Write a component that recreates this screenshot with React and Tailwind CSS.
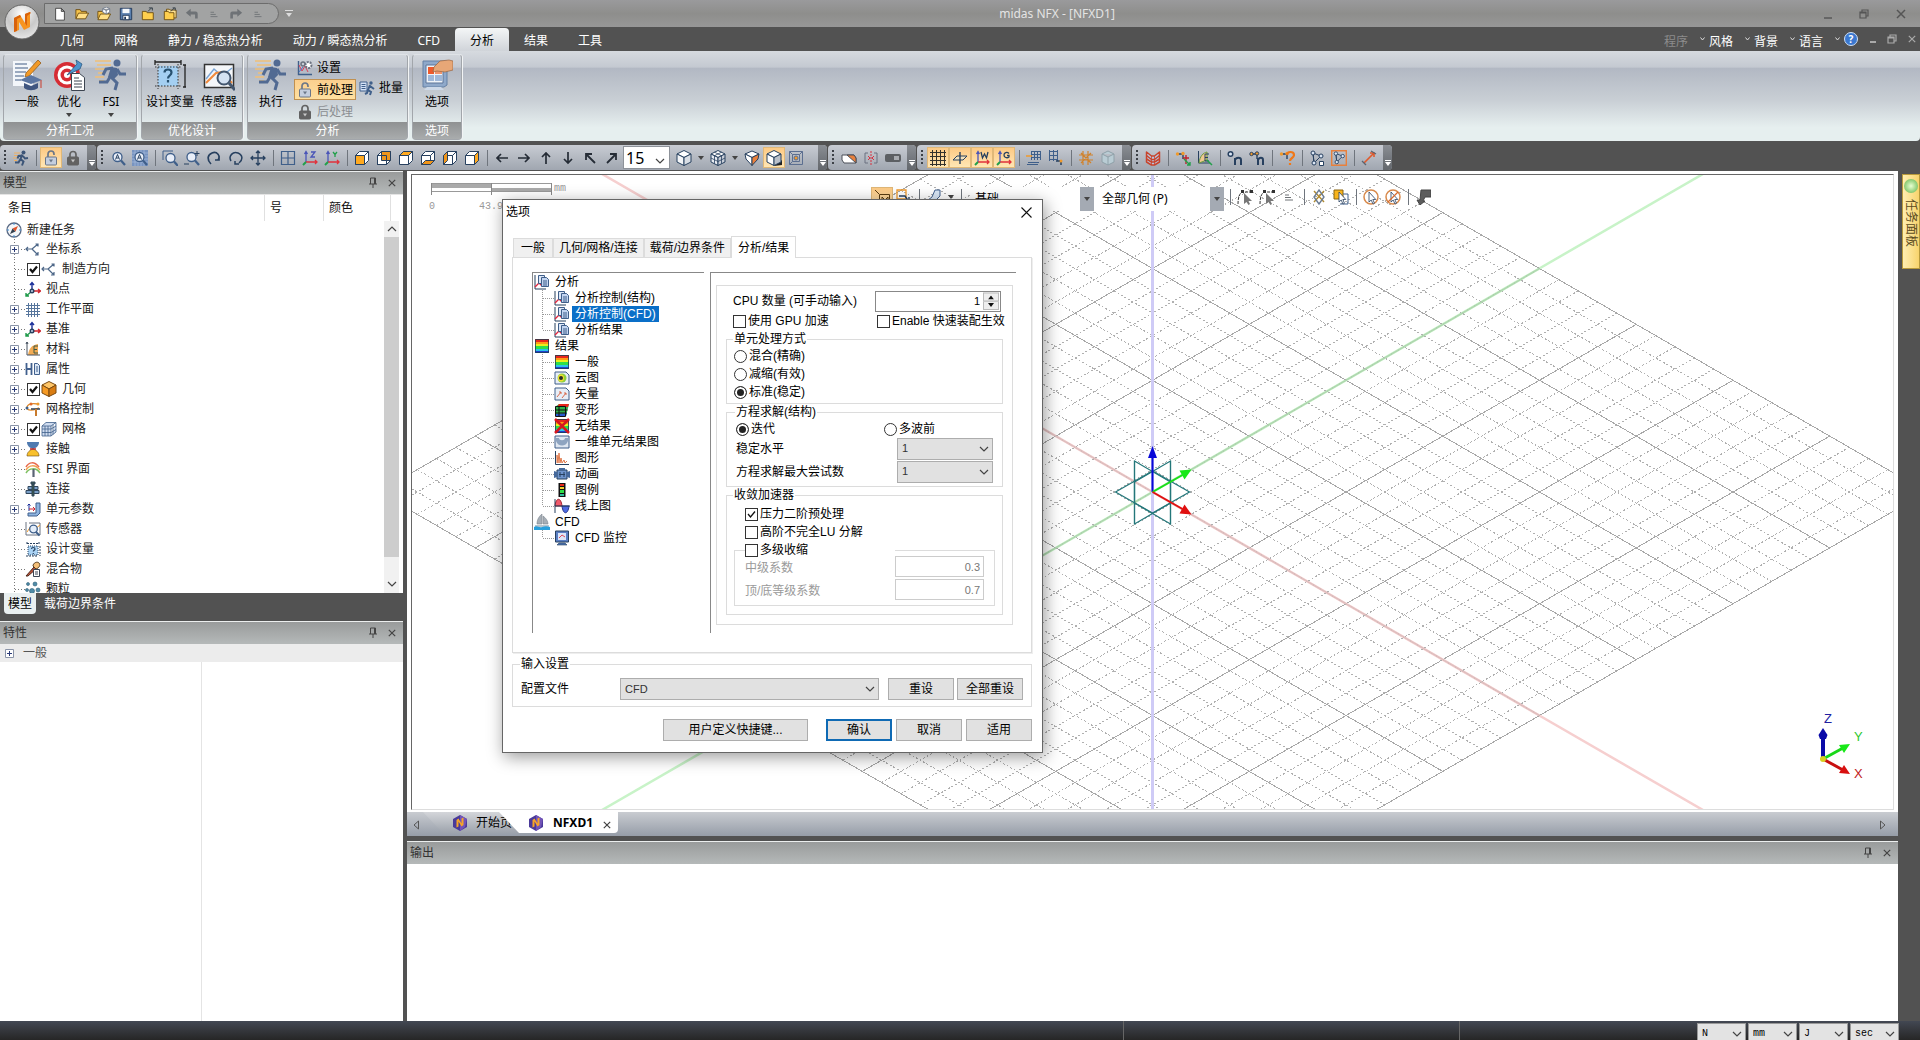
import { useState } from "react";

const BLUE = "#3f5f8a";
const NAVY = "#27405f";
const ORANGE = "#f09a2c";

/* ---------- icons ---------- */

const cube = (front, top, side) => (
  <g stroke={NAVY} strokeWidth="1" strokeLinejoin="round">
    <path d="M1.5 5.5 5.5 1.5h9v9l-4 4h-9z" fill="#fff" />
    {front && <path d="M1.5 5.5h9v9h-9z" fill="#ffa91f" />}
    {top && <path d="M1.5 5.5 5.5 1.5h9l-4 4z" fill="#ffa91f" />}
    {side && <path d="M10.5 5.5l4-4v9l-4 4z" fill="#ffa91f" />}
    <path d="M1.5 5.5h9v9M10.5 5.5l4-4" fill="none" />
  </g>
);

const isoCube = (left, right, top) => (
  <g stroke={NAVY} strokeLinejoin="round">
    <path d="M8 .5 15 4 8 7.500 1 4z" fill={top} />
    <path d="M1 4 8 7.500v8L1 12z" fill={left} />
    <path d="M15 4 8 7.500v8L15 12z" fill={right} />
  </g>
);

const runner = (
  <g>
    <path d="M1 3h6M1 5.500h5M0 8h4M1 10.500h3" stroke="#f0b060" />
    <circle cx="10.500" cy="2.500" r="2" fill="#3c5578" />
    <path d="M9.500 4.500 7.500 9l3 2.500-1.500 4M7.500 9l-2 3.500H2M9 5.500 5.500 6 4.500 8.500M10 6l2 2.500L15 8" fill="none" stroke="#3c5578" strokeWidth="2" />
  </g>
);

const lock = (body, open) => (
  <g>
    <path d={open ? "M5 7V4a3 3 0 0 1 6 0v1" : "M5 7V4.500a3 3 0 0 1 6 0V7"} fill="none" stroke={body} strokeWidth="1.700" />
    <rect x="2.500" y="7" width="11" height="8" rx="1" fill={open ? "#c4cede" : body} stroke={body} />
    <path d="M6 9.500h4l-2 3z" fill={open ? body : "#c8c8c8"} />
  </g>
);

const magnifier = (
  <g fill="none" stroke={BLUE}>
    <circle cx="7.500" cy="7" r="4.500" fill="#e8eef8" strokeWidth="1.300" />
    <path d="m11 10.500 4 4.500" strokeWidth="2.200" />
  </g>
);

const triad = (
  <g fill="none" strokeWidth="1.400">
    <path d="M7 9V2M5 4l2-2.500L9 4" stroke="#1a2f9a" />
    <path d="M7 10h8M13 8l2.500 2L13 12" stroke="#d0222c" />
    <path d="m6 11-5 4M1 12v3h3" stroke="#1f9a4a" />
    <circle cx="7" cy="10" r="1.800" fill="#b8c8e0" stroke={NAVY} />
  </g>
);

const axes = (letter) => (
  <g fill="none" strokeWidth="1.300">
    <path d="M4 12V2M2.500 4 4 1.500 5.500 4" stroke="#4a55b8" />
    <path d="M4 12h11M13 10l2 2-2 2" stroke="#e0323c" />
    <path d="m4 12-3 3" stroke="#22a04a" strokeWidth="2" />
    {letter === "Z" && <path d="M9 2h4L9 7h4" stroke="#4a55b8" />}
    {letter === "Y" && <path d="m9 2 2 2.500L13 2m-2 2.500V7" stroke="#22a04a" />}
    {letter === "W" && <path d="m7 2 1.500 6L10.500 4l2 4L14 2" stroke={NAVY} />}
    {letter === "G" && <path d="M13 3.500C11 1.500 8 2.500 8 5s3 3.500 5 2V5.500h-2" stroke={NAVY} />}
  </g>
);

const rainbow = (
  <g>
    <rect x="1" y="1" width="14" height="3" fill="#e8261c" />
    <rect x="1" y="4" width="14" height="2" fill="#ff9a14" />
    <rect x="1" y="6" width="14" height="2" fill="#e8f01c" />
    <rect x="1" y="8" width="14" height="3" fill="#2ee048" />
    <rect x="1" y="11" width="14" height="2" fill="#2ac4e8" />
    <rect x="1" y="13" width="14" height="2" fill="#2040d0" />
    <path d="M1.500 1.500h13v13h-13z" fill="none" stroke="#1c3c50" strokeWidth=".8" />
  </g>
);

const report = (
  <g>
    <path d="M1 1v14h11" fill="none" stroke={NAVY} />
    <path d="m1 13 4-4 3 3 3-2" fill="none" stroke="#e02840" strokeWidth="1.300" />
    <path d="M4.500 1.500h6v8h-6z" fill="#dce6f6" stroke={BLUE} />
    <path d="M7.500 3.500h5l2 2v7h-7z" fill="#c2d4f0" stroke={BLUE} />
    <path d="M9 7h4M9 9h4M9 11h4" stroke={BLUE} />
  </g>
);

const node = (
  <g>
    <path d="M3 4h5v5" fill="none" stroke={NAVY} strokeWidth="1.400" />
    <circle cx="2.500" cy="4" r="1.700" fill={ORANGE} />
    <circle cx="8" cy="3.500" r="1.700" fill={ORANGE} />
  </g>
);

const cursor = (fill) => <path d="M6 3v10l2.200-2 1.800 4 1.500-.7-1.700-3.800h3z" fill={fill} stroke={NAVY} strokeWidth=".8" />;

const arrowIcon = (turn) => (
  <g transform={`rotate(${turn} 8 8)`} fill="none" stroke="#252c36" strokeWidth="1.700">
    <path d="M14 8H3M7 4 3 8l4 4" />
  </g>
);

const cornerArrow = (flip) => (
  <g transform={flip ? "translate(16 0) scale(-1 1)" : undefined} fill="none" stroke="#252c36" strokeWidth="1.800">
    <path d="M13 13 4 4M4 10V4h6" />
  </g>
);

const graphNodes = (
  <g fill="none" stroke={NAVY}>
    <path d="M4 3 12 6 5 13zM4 3l1 10" />
    <circle cx="4" cy="3" r="2" fill="#dbe6f5" />
    <circle cx="12" cy="6" r="2" fill="#dbe6f5" />
    <circle cx="5" cy="13" r="2" fill="#dbe6f5" />
  </g>
);

const sensor = (
  <g fill="none">
    <path d="M1 1v13h14V2H4" stroke="#6b7280" />
    <path d="m2 11 4-6 4 3 5-4" stroke={ORANGE} />
    <circle cx="8.500" cy="8" r="3.800" fill="#e4eefa" stroke={BLUE} strokeWidth="1.300" />
    <path d="m11 11 3.500 3.500" stroke={BLUE} strokeWidth="2" />
  </g>
);

const designVar = (
  <g fill="none">
    <path d="M2 1v3M14 1v3M2 2.500h12M15 5v10M1 15h12" stroke={NAVY} strokeDasharray="2 1" />
    <rect x="3" y="5" width="10" height="9" fill="#a9d2f4" stroke={NAVY} strokeDasharray="1 1" />
    <path d="M6.500 8c0-2 3.500-2 3.500 0 0 1.300-1.700 1.200-1.700 2.600M8.300 12v1" stroke={NAVY} strokeWidth="1.200" />
  </g>
);

const icons = {
  runner,
  lockOpen: lock("#6a7688", true),
  lockShut: lock("#626262", false),
  newFile: <path d="M3 1.500h6.500L13 5v10H3zM9.500 1.500V5H13" fill="#fff" stroke="#3c3c3c" />,
  open: (
    <g stroke="#6b4a0c">
      <path d="M1 13V3h5l1 2h6v2" fill="#f6c44c" />
      <path d="m1 13.500 3-6.500h11.500L12 13.500z" fill="#ffdf86" />
    </g>
  ),
  openCube: (
    <g stroke="#6b4a0c">
      <path d="M1 13V5h5l1 1h6v2" fill="#f6c44c" />
      <path d="m1 14.500 3-6.500h11.500L12 14.500z" fill="#ffdf86" />
      <path d="m10.500 0 4 2v4l-4 2-4-2V2zM6.500 2l4 2 4-2M10.500 4v4" fill="#fff" stroke="#6a7688" />
    </g>
  ),
  save: (
    <g>
      <path d="M1.500 1.500h13v13h-13z" fill="#5a7fae" stroke="#1f3556" />
      <path d="M4 2h8v5H4z" fill="#f4f7fb" />
      <path d="M4.500 9.500h7v5h-7z" fill="#fff" stroke="#1f3556" />
      <path d="M6 11h2v3H6z" fill="#1f3556" />
    </g>
  ),
  folderUp: (
    <g stroke="#6b4a0c">
      <path d="M1.500 14.500V5H6l1 1.500h7v8z" fill="#ffcf4e" />
      <path d="m8 5 4-4M9 1h4v3" fill="none" stroke="#2d3742" />
    </g>
  ),
  foldersUp: (
    <g stroke="#6b4a0c">
      <path d="M4 12V2.500h3l1 1h7v9z" fill="#ffe394" />
      <path d="M1.500 14.500V5H6l1 1.500h5.500v8z" fill="#ffcf4e" />
      <path d="m9 5 4-4M11 1h3v3" fill="none" stroke="#2d3742" />
    </g>
  ),
  undo: <path d="M1 6.500 6.500 2v3H12c2 0 2.500 1 2.500 3v5h-3V8.500h-5V11z" fill="#6e7276" />,
  redo: <path d="M15 6.500 9.500 2v3H4C2 5 1.500 6 1.500 8v5h3V8.500h5V11z" fill="#6e7276" />,
  lines: <path d="M4 6h4M4 8.500h6M4 11h8" stroke="#6e7276" />,
  settings: (
    <g fill="none">
      <path d="M1.500 1v13.500H15" stroke={BLUE} strokeWidth="1.400" />
      <path d="m2 5 3 6 3-5 3 6" stroke="#d8405a" />
      <path d="m2 12 4-5" stroke="#4a78c8" />
      <circle cx="6" cy="4" r="2" stroke="#6b7280" strokeWidth="1.500" />
      <circle cx="11.500" cy="5" r="3" fill="#fff" stroke="#6b7280" strokeWidth="2" strokeDasharray="2 1" />
    </g>
  ),
  batch: (
    <g>
      <path d="M1 2h7v9H1z" fill="#d4e2f6" stroke={BLUE} />
      <path d="M2.500 4.500h4M2.500 6.500h4M2.500 8.500h4" stroke={BLUE} />
      <circle cx="12" cy="3" r="1.700" fill={BLUE} />
      <path d="m11 5-2 5 3 2-1 3M9 10l-1 3-2 1M11 6l4 3" fill="none" stroke={BLUE} strokeWidth="2" />
    </g>
  ),
  zoomA: (
    <g>
      {magnifier}
      <path d="m5.500 9.500 2-5 2 5M6.300 8h2.400" fill="none" stroke={NAVY} />
    </g>
  ),
  zoomAGrid: (
    <g>
      <path d="M0 0h16v16H0z" fill="#7894c0" />
      <path d="M0 3h16M0 6h16M0 9h16M0 12h16M3 0v16M6 0v16M9 0v16M12 0v16" stroke="#a8bcdc" strokeWidth=".7" />
      {magnifier}
      <path d="m5.500 9.500 2-5 2 5M6.300 8h2.400" fill="none" stroke={NAVY} />
    </g>
  ),
  zoomWin: (
    <g>
      <path d="M1 10V1h10" fill="none" stroke={BLUE} />
      <g transform="translate(1 1)">{magnifier}</g>
    </g>
  ),
  zoomPlus: (
    <g>
      {magnifier}
      <path d="M13 1v5M10.500 3.500h5M0 14h5" stroke={NAVY} />
    </g>
  ),
  rotateL: <path d="M5 14c-4-4-4-9 1-11s9 3 6 7M9 10h4v-4" fill="none" stroke={NAVY} strokeWidth="1.700" />,
  rotateR: <path d="M3 11C0 6 5 1 10 3s5 7 1 10M7 11v3h4" fill="none" stroke={NAVY} strokeWidth="1.500" />,
  move: <path d="M8 1v14M1 8h14M6 3l2-2 2 2M6 13l2 2 2-2M3 6 1 8l2 2M13 6l2 2-2 2" fill="none" stroke={NAVY} strokeWidth="1.300" />,
  windows: <path d="M1.500 1.500h13v13h-13zM8 1.500v13M1.500 8h13" fill="none" stroke={BLUE} strokeWidth="1.200" />,
  axisZ: axes("Z"),
  axisY: axes("Y"),
  axisW: axes("W"),
  axisG: axes("G"),
  cubeFront: cube(true, false, false),
  cubeBack: (
    <g>
      {cube(false, false, false)}
      <path d="M5.500 1.500h9v9h-9z" fill="#f0951a" stroke={NAVY} />
      <path d="M1.500 5.500h9v9h-9z" fill="none" stroke={NAVY} />
    </g>
  ),
  cubeTop: cube(false, true, false),
  cubeBottom: (
    <g>
      {cube(false, false, false)}
      <path d="m1.500 14.500 4-4h9l-4 4z" fill="#f0951a" stroke={NAVY} />
    </g>
  ),
  cubeLeft: (
    <g>
      {cube(false, false, false)}
      <path d="m1.500 5.500 4-4v9l-4 4z" fill="#f0951a" stroke={NAVY} />
    </g>
  ),
  cubeRight: cube(false, false, true),
  left: arrowIcon(0),
  right: arrowIcon(180),
  up: arrowIcon(90),
  down: arrowIcon(270),
  upLeft: cornerArrow(false),
  upRight: cornerArrow(true),
  isoWhite: isoCube("#f4f6f8", "#d8dde4", "#fff"),
  isoGrid: (
    <g>
      {isoCube("#e8ecf2", "#c8ced8", "#fff")}
      <path d="m1 8 7 3.500L15 8M4.500 2.200l7 3.500v8M11.500 2.200l-7 3.500v8" fill="none" stroke={NAVY} strokeWidth=".8" />
    </g>
  ),
  isoHalf: (
    <g stroke={NAVY} strokeLinejoin="round">
      <path d="M1 4 8 1l7 3-7 3.500z" fill="#fff" />
      <path d="M1 4 8 7.500v8L2 9z" fill="#fff" />
      <path d="M15 4 8 7.500v8L14 9z" fill="#e8803c" />
    </g>
  ),
  isoShadow: (
    <g>
      <path d="m8 16 8-1v-5z" fill="#222" />
      {isoCube("#fff", "#b9c0ca", "#fff")}
    </g>
  ),
  isoFrame: (
    <g fill="none" stroke="#5c6f90">
      <path d="M1.500 1.500h13v13h-13z" />
      <path d="M4.500 4.500h7v7h-7zM1.500 1.500l3 3M14.500 1.500l-3 3M1.500 14.500l3-3" />
      <circle cx="8" cy="8" r="2" fill={ORANGE} />
    </g>
  ),
  clip: (
    <g stroke="#4a4f58">
      <path d="M1 5h12l2 3v5H3L1 10z" fill="#fff" />
      <path d="m6 5 7 0 2 3v5z" fill="#e8803c" />
    </g>
  ),
  mirror: (
    <g fill="none">
      <path d="M5 3H2v10h3M11 3h3v10h-3" stroke="#6a7080" />
      <path d="M8 1v14" stroke="#d83040" strokeDasharray="2 1" />
      <path d="m5 6 2 2-2 2M11 6 9 8l2 2" stroke="#d83040" />
    </g>
  ),
  capsule: (
    <g>
      <rect x="0" y="4" width="16" height="8" rx="2" fill="#5c5f63" />
      <path d="M9 6h5v4H9z" fill="#a8abb0" />
    </g>
  ),
  gridOn: <path d="M0 2.500h16M0 6.500h16M0 10.500h16M0 14.500h16M2.500 0v16M6.500 0v16M10.500 0v16M14.500 0v16" stroke="#33312c" />,
  plane: (
    <g fill="none" stroke={NAVY}>
      <path d="M1 10h10l4-4H5z" fill="#f4e2bb" />
      <path d="M8 2v12" strokeWidth="1.400" />
    </g>
  ),
  gridMove: (
    <g fill="none" stroke={BLUE}>
      <path d="M5.500 1v9M8.500 1v9M11.500 1v9M14.500 1v9M5 1.500h10M5 4.500h10M5 7.500h10M2 12.500h11M1 14.500h11" />
      <path d="M0 6h6" stroke={ORANGE} strokeWidth="1.500" />
    </g>
  ),
  gridNode: (
    <g fill="none" stroke={BLUE}>
      <path d="M1 1.500h9M1 5.500h9M1 9.500h9M1.500 0v11M5.500 0v11M9.500 0v11" />
      <path d="M8 11h5v4" stroke={NAVY} strokeWidth="1.500" />
      <circle cx="13" cy="11" r="1.500" fill={ORANGE} stroke="none" />
    </g>
  ),
  snap: <path d="M5 1v14M10 1v14M1 5h14M1 10h14M3 3l10 10M13 3 3 13" fill="none" stroke="#d0822c" strokeWidth="1.200" />,
  glassCube: (
    <g stroke="#8fa0a8" fill="#b9ccd4">
      <path d="m8 1 6 3v8l-6 3-6-3V4zM2 4l6 3 6-3M8 7v8" />
    </g>
  ),
  mesh: (
    <g fill="none" stroke="#c8442c" strokeWidth="1.500" strokeLinejoin="round">
      <path d="m1.500 2 5 4h3l5-4v10l-5 3h-3l-5-3z" fill="#b8c4dd" />
      <path d="m1.500 5.500 5 4h3l5-4M1.500 9l5 3h3l5-3" />
      <path d="M6.500 6v9M9.500 6v9" strokeWidth=".8" />
    </g>
  ),
  nodeAxis: (
    <g>
      {node}
      <path d="M8 8h6M11 5v9" stroke="#c0222c" strokeWidth="1.400" />
      <path d="m9 9 6 6M15 12v3h-3" fill="none" stroke="#22a04a" strokeWidth="1.400" />
    </g>
  ),
  curveE: (
    <g fill="none">
      <path d="M1.500 1v12H13" stroke={NAVY} />
      <path d="M2 13C3 6 6 3 10 2v8z" fill="#f0c890" stroke="#6a9a3c" />
      <path d="M12 4H8v7h4M8 7.500h3" stroke={NAVY} />
      <path d="m10 10 5 5" stroke="#22a04a" strokeWidth="1.500" />
    </g>
  ),
  ballN: (
    <g fill="none" stroke={NAVY} strokeWidth="1.500">
      <circle cx="3.500" cy="4" r="2.300" fill="#dbe6f5" />
      <path d="M8 15V8M8 10c1-3 6-3 6 0v5" strokeWidth="2" />
    </g>
  ),
  nodeN: (
    <g fill="none" stroke={NAVY}>
      {node}
      <path d="M9 15V8M9 10c1-3 5-3 5 0v5" strokeWidth="2" />
    </g>
  ),
  nodeQ: (
    <g fill="none">
      {node}
      <path d="M8 5c0-4 7-4 7 0 0 3-4 3-4 6M11 13v2" stroke="#f07818" strokeWidth="2.200" />
    </g>
  ),
  graph: (
    <g>
      {graphNodes}
      <path d="M10.500 11.500h4v4h-4z" fill="#fff" stroke={NAVY} />
    </g>
  ),
  graphBox: (
    <g>
      <path d="M.7.700h14.600v14.600H.7z" fill="none" stroke="#e8803c" strokeWidth="1.400" />
      <g transform="translate(1.500 1) scale(.85)">{graphNodes}</g>
    </g>
  ),
  measure: (
    <g fill="none">
      <path d="m3 13 10-10M9 3h4v4" stroke="#e05a2c" strokeWidth="1.600" />
      <path d="m10 1 5 3M1 11l4 4" stroke="#5c6470" strokeWidth="1.300" />
    </g>
  ),
  compass: (
    <g>
      <circle cx="8" cy="8" r="7" fill="#f4f6f8" stroke="#5a6a84" strokeWidth="1.300" />
      <path d="M8 1v2M8 13v2M1 8h2M13 8h2" stroke="#3f8fd8" />
      <path d="M12 4 9.500 9.500 6.500 6.500z" fill="#e0542c" />
      <path d="M4 12 6.500 6.500l3 3z" fill="#33404f" />
    </g>
  ),
  coord: <path d="M1 8h6M3 6 1 8l2 2M7 8l6-5M10.500 3H13v2.500M7 8l6 6M13 11v3h-3" fill="none" stroke="#4d6788" strokeWidth="1.200" />,
  triad,
  workplane: <path d="M1 4.500h14M1 7.500h14M1 10.500h14M1 13.500h14M3.500 2v14M6.500 2v14M9.500 2v14M12.500 2v14" stroke="#56759c" />,
  material: (
    <g fill="none">
      <path d="M3 14C4 7 7 4 13 3v11z" fill="#f2ab54" />
      <path d="M2 1v13h13M1 3l1-2 1 2" stroke="#44505e" />
      <path d="M13 5H9v7h4M9 8.500h3" stroke="#3f5a44" />
    </g>
  ),
  property: (
    <g fill="none" stroke="#41608e">
      <path d="M1.500 2v12M6.500 2v12M1.500 8h5" strokeWidth="1.800" />
      <path d="M9.500 2.500h3l2 2v9h-5zM11 6h2M11 8h2M11 10h2" fill="#dce8f6" />
    </g>
  ),
  geometry: (
    <g stroke="#7a4a10" strokeLinejoin="round">
      <path d="m8 .5 7 3.500-7 4-7-4z" fill="#ffc668" />
      <path d="M1 4l7 4v7.500L1 12z" fill="#f59a24" />
      <path d="M15 4 8 8v7.500l7-3.500z" fill="#d97c12" />
    </g>
  ),
  meshCtl: (
    <g fill="none">
      <path d="M2 6c1-4 5-4 11-3M2 8c5 3 8 0 12-1" stroke="#e08a2c" strokeWidth="1.300" />
      <circle cx="2" cy="7" r="1.500" fill={BLUE} />
      <circle cx="6" cy="3" r="1.500" fill="#e06a2c" />
      <circle cx="13" cy="3" r="1.500" fill={ORANGE} />
      <path d="M6 8h9" stroke="#3a4a60" strokeWidth="1.600" />
      <path d="M11 8v7" stroke="#c87a2c" strokeWidth="2" />
    </g>
  ),
  meshCube: (
    <g fill="#cfdcf0" stroke="#3f5f8a" strokeWidth=".8">
      <path d="M1 5h9v10H1zM1 5l4-3.500h10L10 5M15 1.500V11l-5 4" />
      <path d="M4 5v10M7 5v10M1 8h9l5-3M1 11.500h9l5-3M12 3.500v10" fill="none" />
    </g>
  ),
  contact: (
    <g>
      <path d="M2 1h12c0 4-3 6-6 7-3-1-6-3-6-7z" fill="#4f7ab0" />
      <path d="M2 15c0-4 3-6 6-7 3 1 6 3 6 7z" fill="#f8c02c" stroke="#6a4a10" strokeWidth=".6" />
      <path d="M5 8h6" stroke="#c02c2c" strokeWidth="1.500" />
    </g>
  ),
  fsi: (
    <g fill="none" strokeWidth="1.500">
      <path d="M1 6c3-5 8-6 13 0" stroke="#e86a4c" />
      <path d="M1 9c3-5 9-6 14 0" stroke="#f0a050" />
      <path d="M1 12c3-5 10-6 14 0" stroke="#7cc060" />
      <path d="M8.500 8v8" stroke="#5a6474" strokeWidth="2.200" />
    </g>
  ),
  link: (
    <g stroke="#31465c">
      <path d="M3 5.500h10v3H3zM1 9.500h13v3H1z" fill="#7aa0c8" />
      <path d="M6 3V1h4v2zM7 3v12h2V3z" fill="#3c5a48" />
    </g>
  ),
  element: (
    <g>
      <path d="M11 2h4v10l-3 3H3v-3h8z" fill="#8eb4e0" stroke="#41608e" />
      <path d="M4 10V3M2.500 4.500 4 3l1.500 1.500" fill="none" stroke="#1a2f9a" />
      <path d="M4 8h6M8 6l2 2-2 2" fill="none" stroke="#d0222c" />
    </g>
  ),
  sensor,
  designVar,
  mixture: (
    <g>
      <path d="m1 15 8-9 2 2-8 7z" fill="#c05038" stroke="#4a2a1c" />
      <path d="M8 5c0-3 4-5 6-3s0 5-3 6z" fill="#f6c078" stroke="#5a4020" />
      <path d="M8.500 8.500h6v7h-6zM10 11h3M10 13h3" fill="#fff" stroke="#3a4454" />
    </g>
  ),
  particle: (
    <g fill="#4f8ca8" stroke="#2c5a72" strokeWidth=".6">
      <circle cx="3" cy="3" r="1.500" />
      <circle cx="10" cy="3" r="2" />
      <circle cx="2" cy="9" r="1.500" />
      <circle cx="7" cy="10" r="2.500" />
      <circle cx="13" cy="9" r="2" />
    </g>
  ),
  report,
  rainbow,
  contour: (
    <g>
      <path d="M1 2h11l3 3v9H1z" fill="#e8eef6" stroke={BLUE} />
      <circle cx="8" cy="8" r="4.500" fill="#8ed03c" />
      <ellipse cx="7" cy="8" rx="3" ry="3.500" fill="#f4e02c" />
      <circle cx="7" cy="8" r="2" fill="#2a2f2a" />
    </g>
  ),
  vector: (
    <g fill="none">
      <path d="M1 2h11l3 3v9H1z" fill="#e8eef6" stroke={BLUE} />
      <path d="m3 11 4-5M5 6h2v2M8 12l4-5M10 7h2v2" stroke="#d86a4c" />
    </g>
  ),
  deform: (
    <g>
      <path d="M1 5 5 2h10l-3 12H1z" fill="#2fb04c" />
      <path d="m5 2-2 3h11l1-3z" fill="#e8261c" />
      <path d="m2 12 11-1-1 3H1z" fill="#2858d0" />
      <path d="M1.500 4.500h10v10h-10zM1.500 8h12M1.500 11h11M5 4v11" fill="none" stroke="#111" />
    </g>
  ),
  noResult: (
    <g>
      {rainbow}
      <path d="m1 1 14 14M15 1 1 15" stroke="#d81820" strokeWidth="2.500" />
    </g>
  ),
  diagram1d: (
    <g>
      <path d="M1 2h14v12H1z" fill="#dfe7f1" stroke={BLUE} />
      <path d="M2 4h3c0 3 6 3 6 0h3v3c-2 6-10 6-12 0z" fill="#8ea4c0" />
    </g>
  ),
  plot: (
    <g fill="none">
      <path d="M1.500 1v13.500H15" stroke={NAVY} />
      <path d="M3 13V5l1 8 1-10 1 10 1-5 1 5 2-3 1 3 2-2" stroke="#e07a4c" />
    </g>
  ),
  movie: (
    <g>
      <path d="M3 4h10v9H3z" fill="#6e94cc" stroke={NAVY} />
      <path d="M5 2h6v2H5zM0 5l3 1v5l-3 1zM16 5l-3 1v5l3 1z" fill="#45699c" />
      <path d="M5 8.500h6M6 6v5M10 6v5" stroke={NAVY} />
    </g>
  ),
  legend: (
    <g>
      <path d="M4.500 1h7v14h-7z" fill="#111" />
      <path d="M6 2h4v2H6z" fill="#e8261c" />
      <path d="M6 5h4v2H6z" fill="#f4d02c" />
      <path d="M6 8h4v3H6z" fill="#2ee048" />
      <path d="M6 12h4v2H6z" fill="#30c0a0" />
    </g>
  ),
  lineDiagram: (
    <g>
      <path d="M1 8C2-1 7-1 8 8z" fill="#f05a6c" stroke="#a0202c" />
      <path d="M8 8c1 9 6 9 7 0z" fill="#4c6ae0" stroke="#20308c" />
      <path d="M1 1v14M1 8h15" stroke={NAVY} />
    </g>
  ),
  ship: (
    <g>
      <path d="M8 0C4 3 3 7 3 10h5zM9 2v8h5c0-3-2-6-5-8z" fill="#a6aeb6" stroke="#7c858e" strokeWidth=".6" />
      <path d="M1 11h14v2H1z" fill="#b8c4cc" />
      <path d="M0 13c3-2 5 1 8 0s5-1 8 0v3H0z" fill="#2aa0dc" />
    </g>
  ),
  monitor: (
    <g>
      <path d="M1.500 1h13v11h-13z" fill="#5a7ec4" stroke={NAVY} />
      <path d="M4 3h8v7H4z" fill="#dce6f8" />
      <path d="m5 8 3-3 3 2" fill="none" stroke="#e04c5c" />
      <path d="M5 13h6l2 2H3z" fill="#4f76b4" stroke={NAVY} strokeWidth=".6" />
    </g>
  ),
  pickBox: (
    <g fill="none" stroke="#5a3c10">
      <path d="m1 1 4 4" />
      <path d="M5.500 5.500h10v10h-10z" />
      <path d="M8 14V8l3 3 3-3v6" />
    </g>
  ),
  pickAdd: (
    <g fill="none">
      <path d="M1 1h9v9H1z" stroke={ORANGE} strokeWidth="1.300" />
      <path d="M3 7h6l4 6M13 8v5H8" stroke={NAVY} strokeWidth="1.400" />
    </g>
  ),
  pickUndo: <path d="M9 1h5v6L9 12l-2 3-2-4H2l4-3z" fill="#d8e6f6" stroke="#41608e" />,
  polyPick: (
    <g>
      <path d="M1 15C1 8 3 3 6 3h9" fill="none" stroke="#333" strokeDasharray="3 1" />
      <path d="M4 1h3v3H4zM13 1h3v3h-3z" fill="#333" />
      <path d="M7 4v11l2.500-2 2 3 1.500-1-1.500-3H15z" fill="#777" />
    </g>
  ),
  diamondPick: (
    <g fill="none" strokeWidth="1.400">
      <path d="M3 2l10 11M13 2 3 13" stroke="#b08a30" />
      <path d="m8 1 5 7-5 7-5-7z" stroke="#6a7c94" />
    </g>
  ),
  boxPick: (
    <g>
      <path d="M1 1h9v9H1z" fill="#f8b41c" stroke="#8a6410" />
      <path d="M10 5h5v10h-8" fill="none" stroke={BLUE} />
      {cursor("#fff")}
    </g>
  ),
  ringPick: (
    <g>
      <circle cx="8" cy="8" r="7" fill="#fff" stroke="#d88a4c" strokeWidth="1.500" />
      {cursor("#fff")}
    </g>
  ),
  ringPickOff: (
    <g>
      <circle cx="8" cy="8" r="7" fill="#fff" stroke="#d88a4c" strokeWidth="1.500" />
      {cursor("#fff")}
      <path d="m3 13 10-10" stroke="#d86a2c" strokeWidth="1.300" />
    </g>
  ),
  idTag: <path d="M6 1h10v7h-6L8 12h2l-5 4-3-5h3z" fill="#5c5c5c" stroke="#444" />,
};

function Icon({ name, className = "h-4 w-4" }) {
  return (
    <svg viewBox="0 0 16 16" className={`shrink-0 ${className}`} aria-hidden="true">
      {icons[name]}
    </svg>
  );
}

const bigIcons = {
  general: (
    <g>
      <path d="M2 2h17l3 3v22H2z" fill="#f3f6fa" />
      <path d="M4 5h12M4 9h13M4 13h11M4 17h9M4 21h6" stroke="#7e90ac" strokeWidth="1.500" />
      <path d="M27 1l3 3-12 13-4 1 1-4z" fill="#f29a28" stroke="#8a5210" strokeWidth=".7" />
      <path d="m9 21 11-5 11 5-11 4z" fill="#5b76a2" />
      <path d="M13 24v5c4 3 10 3 14 0v-5l-7 3z" fill="#3f5680" />
      <path d="M30 21v8" stroke="#c85a50" strokeWidth="1.300" />
    </g>
  ),
  optimize: (
    <g>
      <circle cx="14" cy="16" r="13" fill="#d62c34" />
      <circle cx="14" cy="16" r="9.500" fill="#fff" />
      <circle cx="14" cy="16" r="6.500" fill="#d62c34" />
      <circle cx="14" cy="16" r="3" fill="#fff" />
      <path d="M14 16 24 5l-1-4 6 4-2 5z" fill="#4e94cc" stroke="#2c5a84" strokeWidth=".8" />
      <path d="M18.500 14.500h8l5 4v13h-13z" fill="#fff" stroke="#3c4450" />
      <path d="M21 19h5M21 22h8M21 25h8M21 28h8" stroke="#3c4450" strokeWidth="1.200" />
    </g>
  ),
  run: (
    <g>
      <path d="M0 2h16M2 6h14M0 10h12M3 14h7M0 18h9M4 22h5" stroke="#f0c078" strokeWidth="1.500" />
      <circle cx="22" cy="4" r="3.500" fill="#516a92" />
      <path d="m16 8 6 1 1 7-5 5-5-3z" fill="#516a92" />
      <path d="m18 9-7 1-3 6M22 10l3 5 6 0M15 18l-3 5H4M17 19l5 5-2 7" fill="none" stroke="#516a92" strokeWidth="3" />
    </g>
  ),
  design: (
    <g fill="none">
      <path d="M1 1v5M27 1v5M1 3h26M31 6v22M29 6h3M29 28h3" stroke="#222" strokeWidth="1.300" />
      <path d="M4 7h20v20H4z" fill="#a4cff2" />
      <path d="M1 8h26M1 27h26M4 5v25M24 5v25" stroke="#333" strokeDasharray="1.500 1.500" />
      <path d="M10.500 13.500c0-4 7-4 7 0 0 3-3.500 3-3.500 6M14 21v2.500" stroke="#27506f" strokeWidth="2.200" />
    </g>
  ),
  sensorBig: (
    <g fill="none">
      <path d="M1.500 5.500h29v23h-29z" fill="#f4f6f9" stroke="#333" strokeWidth="1.500" />
      <path d="m3 20 8-10 8 7 10-8" stroke="#7aa4d4" strokeWidth="1.500" />
      <path d="m3 24 10-10 6-1 10 11" stroke="#f08a3c" strokeWidth="2" />
      <circle cx="21" cy="19" r="6.500" fill="#d4e2f2" stroke="#43566e" strokeWidth="2" />
      <path d="m26 24 6 7" stroke="#43566e" strokeWidth="3" />
    </g>
  ),
  option: (
    <g>
      <path d="M2 2h24v24l-3 2H2z" fill="#8fa9ca" stroke="#6580a4" />
      <path d="M5 6h17v18H5z" fill="#eef3f8" stroke="#5c7598" />
      <path d="M7 8h6v7H7z" fill="#ee5a2c" />
      <path d="M14 9h7v6h-7z" fill="#f0946c" />
      <path d="M7 16h6v6H7zM14 16h7v6h-7z" fill="#a0b8d8" />
      <path d="m13 8 6-6 9-1 4 1v9l-8 2-8-1-4 1z" fill="#e7a777" stroke="#9a6440" strokeWidth=".7" />
      <path d="M6 28h14l3 3H3z" fill="#cdd9e8" />
    </g>
  ),
};

function BigIcon({ name }) {
  return (
    <svg viewBox="0 0 32 32" className="h-8 w-8" aria-hidden="true">
      {bigIcons[name]}
    </svg>
  );
}

function Chevron({ className = "" }) {
  return (
    <svg viewBox="0 0 10 6" className={`h-1.5 w-2.5 ${className}`} aria-hidden="true">
      <path d="m1 1 4 4 4-4" fill="none" stroke="#444" strokeWidth="1.200" />
    </svg>
  );
}

function Caret({ color = "#444" }) {
  return (
    <svg viewBox="0 0 6 4" className="h-1 w-1.5 shrink-0" aria-hidden="true">
      <path d="M0 0h6L3 4z" fill={color} />
    </svg>
  );
}

function CloseMark({ color = "#444", className = "h-2.5 w-2.5" }) {
  return (
    <svg viewBox="0 0 10 10" className={className} aria-hidden="true">
      <path d="m1 1 8 8M9 1 1 9" stroke={color} strokeWidth="1.500" />
    </svg>
  );
}

function NBadge() {
  return (
    <svg viewBox="0 0 16 16" className="h-4 w-4 shrink-0" aria-hidden="true">
      <path d="m8 0 7 4v8l-7 4-7-4V4z" fill="#4a3a9a" />
      <path d="m8 0 7 4-2 8-5 4z" fill="#7254b8" />
      <path d="M4.500 12.500V5l2-1.500 3 5V3.500l2-1V10l-2 1.500-3-5v5z" fill="#f7a428" />
    </svg>
  );
}

/* ---------- title bar and menu ---------- */

const quickAccess = ["newFile", "open", "openCube", "save", "folderUp", "foldersUp", "undo", "lines", "redo", "lines"];

function RestoreMark({ color }) {
  return (
    <svg viewBox="0 0 10 10" className="h-2.5 w-2.5" aria-hidden="true">
      <path d="M3 3V1h6v6H7M1 3h6v6H1zM1 4h6" fill="none" stroke={color} strokeWidth="1.200" />
    </svg>
  );
}

function TitleBar() {
  return (
    <header className="relative flex h-[27px] items-center bg-linear-to-b from-[#9a9a9c] via-[#8e8e8c] to-[#979797] text-[12px]">
      <div className="ml-11 flex h-[21px] w-[235px] items-center rounded-r-full border border-[#6c6c6c] bg-[#a2a3a3] pl-1">
        {quickAccess.map((name, i) => (
          <button key={i} aria-label={name} className="flex w-[22px] justify-center">
            <Icon name={name} className="h-3.5 w-3.5" />
          </button>
        ))}
      </div>
      <button aria-label="自定义" className="ml-1 flex w-3 flex-col items-center gap-0.5">
        <span className="h-px w-2 bg-[#ddd]" />
        <Caret color="#ddd" />
      </button>
      <h1 className="absolute inset-x-0 top-1.5 pl-[194px] text-center leading-4 text-[#e4e4e4]">midas NFX - [NFXD1]</h1>
      <div className="relative ml-auto flex items-center gap-[27px] pr-3.5">
        <button aria-label="最小化" className="mt-2 h-0.5 w-2 bg-[#666]" />
        <button aria-label="还原"><RestoreMark color="#555" /></button>
        <button aria-label="关闭"><CloseMark color="#555" /></button>
      </div>
      <button aria-label="应用菜单" className="absolute left-1 top-1 z-10 h-9 w-9">
        <svg viewBox="0 0 36 36" aria-hidden="true">
          <defs>
            <radialGradient id="orb" cx=".5" cy=".25" r=".8">
              <stop offset="0" stopColor="#fff" />
              <stop offset=".55" stopColor="#c9c9c9" />
              <stop offset="1" stopColor="#ececec" />
            </radialGradient>
          </defs>
          <circle cx="18" cy="18" r="17" fill="url(#orb)" stroke="#666" />
          <path d="M10 28V14l6-3 5 8V10l5-2v15l-6 3-5-8v8z" fill="#f7941e" />
          <path d="m10 14 6-3 1 2-4 2v12l-3 1zM21 10l5-2 1 1-4 3v10l-2-3z" fill="#d8620c" />
        </svg>
      </button>
    </header>
  );
}

const menuTabs = ["几何", "网格", "静力 / 稳态热分析", "动力 / 瞬态热分析", "CFD", "分析", "结果", "工具"];
const sideMenus = ["程序", "风格", "背景", "语言"];

function MenuBar() {
  const [active, setActive] = useState("分析");
  return (
    <nav className="flex h-6 items-end bg-[#525252] pl-[45px] text-[12px] text-white">
      {menuTabs.map((tab) => (
        <button
          key={tab}
          onClick={() => setActive(tab)}
          className={`h-[23px] whitespace-nowrap rounded-t px-[15px] pt-0.5 ${
            active === tab ? "bg-linear-to-b from-[#f4f6f7] to-[#d0d4d9] text-black" : ""
          }`}
        >
          {tab}
        </button>
      ))}
      <div className="ml-auto flex h-6 items-center pr-1">
        {sideMenus.map((menu, i) => (
          <button key={menu} className={`flex w-[45px] items-center gap-3 whitespace-nowrap pt-1.5 ${i === 0 ? "text-[#8c8c8c]" : ""}`}>
            {menu}
            <svg viewBox="0 0 5 4" className="mb-1.5 h-1 w-[5px]" aria-hidden="true">
              <path d="m.5.500 2 2.500 2-2.500" fill="none" stroke="#ddd" />
            </svg>
          </button>
        ))}
        <button aria-label="帮助" className="flex h-3.5 w-3.5 items-center justify-center rounded-full border border-[#cfe0f6] bg-[#3b78d0] text-[10px] font-bold">
          ?
        </button>
        <div className="ml-3 flex items-center gap-[11px]">
          <span className="mt-1.5 h-0.5 w-1.5 bg-[#aaa]" />
          <RestoreMark color="#aaa" />
          <CloseMark color="#aaa" className="h-2 w-2" />
        </div>
      </div>
    </nav>
  );
}

/* ---------- ribbon ---------- */

function RibbonGroup({ title, className, children }) {
  return (
    <section className={`flex flex-col rounded-sm border border-[#a2a6ab] border-t-[#dfe3e7] shadow-[1px_0_0_#f2f4f5] ${className}`}>
      <div className="flex flex-1">{children}</div>
      <h2 className="h-[17px] bg-linear-to-b from-[#8f9192] to-[#a9acad] text-center text-[12px] leading-[18px] text-white">{title}</h2>
    </section>
  );
}

function BigButton({ icon, label, caret, className = "w-[42px]" }) {
  return (
    <button className={`flex flex-col items-center whitespace-nowrap pt-1 ${className}`}>
      <BigIcon name={icon} />
      <span className="leading-[22px]">{label}</span>
      {caret && <Caret />}
    </button>
  );
}

function SmallButton({ icon, label, active, disabled }) {
  return (
    <button
      disabled={disabled}
      className={`flex h-[21px] items-center gap-1 whitespace-nowrap border px-0.5 ${
        active ? "border-[#c09050] bg-linear-to-b from-[#fbcf8e] to-[#ffe0a0]" : "border-transparent"
      } ${disabled ? "text-[#8b8e92]" : ""}`}
    >
      <Icon name={icon} />
      {label}
    </button>
  );
}

function Ribbon() {
  return (
    <div className="flex h-[90px] gap-1 rounded-b-sm bg-[linear-gradient(#d6dadf_0,#c4c9d1_18%,#b2b8c3_19%,#c9cfd5_55%,#e6efef_85%,#e6efef_100%)] px-[3px] pb-px pt-[3px] text-[12px]">
      <RibbonGroup title="分析工况" className="w-[134px]">
        <div className="flex pl-0.5">
          <BigButton icon="general" label="一般" />
          <BigButton icon="optimize" label="优化" caret />
          <BigButton icon="run" label="FSI" caret />
        </div>
      </RibbonGroup>
      <RibbonGroup title="优化设计" className="w-[102px]">
        <BigButton icon="design" label="设计变量" className="w-[56px]" />
        <BigButton icon="sensorBig" label="传感器" className="w-[42px]" />
      </RibbonGroup>
      <RibbonGroup title="分析" className="w-[161px]">
        <BigButton icon="run" label="执行" className="w-[46px]" />
        <div className="flex flex-col gap-px pt-0.5">
          <SmallButton icon="settings" label="设置" />
          <SmallButton icon="lockOpen" label="前处理" active />
          <SmallButton icon="lockShut" label="后处理" disabled />
        </div>
        <div className="flex items-center pb-0.5">
          <SmallButton icon="batch" label="批量" />
        </div>
      </RibbonGroup>
      <RibbonGroup title="选项" className="w-[50px]">
        <BigButton icon="option" label="选项" className="w-12" />
      </RibbonGroup>
    </div>
  );
}

/* ---------- icon toolbars ---------- */

// "|" is a separator, "v" a drop-down arrow, a leading "*" marks a pressed tool
function ToolItems({ items }) {
  return items.map((item, i) => {
    if (item === "|") {
      return (
        <span key={i} className="flex w-2 shrink-0 justify-center">
          <span className="h-4 w-px bg-[#6f757d]" />
        </span>
      );
    }
    if (item === "v") {
      return (
        <span key={i} className="flex w-3 shrink-0 justify-center">
          <Caret />
        </span>
      );
    }
    const pressed = item.startsWith("*");
    const name = pressed ? item.slice(1) : item;
    return (
      <button
        key={i}
        aria-label={name}
        className={`flex h-[21px] w-[22px] shrink-0 items-center justify-center border ${
          pressed ? "border-[#e0b878] bg-linear-to-b from-[#fdca84] to-[#ffe6b4]" : "border-transparent"
        }`}
      >
        <Icon name={name} />
      </button>
    );
  });
}

function ToolGroup({ children }) {
  return (
    <div className="flex h-[25px] items-center overflow-hidden rounded bg-linear-to-b from-[#c8ccd3] to-[#a0a6b0]">
      <svg viewBox="0 0 10 16" className="h-4 w-2.5 shrink-0" aria-hidden="true">
        <path d="M5 0v16" stroke="#3c4046" strokeWidth="2" strokeDasharray="2 2" />
      </svg>
      {children}
      <span className="ml-[3px] flex h-full w-[9px] flex-col items-center justify-end gap-px bg-linear-to-b from-[#8a8e94] to-[#63676c] pb-1">
        <span className="h-px w-1.5 bg-white" />
        <Caret color="#fff" />
      </span>
    </div>
  );
}

function Toolbars() {
  return (
    <div className="mt-1 flex h-[25px] gap-px bg-[#525252]">
      <ToolGroup>
        <ToolItems items={["runner", "|", "*lockOpen", "lockShut"]} />
      </ToolGroup>
      <ToolGroup>
        <ToolItems
          items={[
            "zoomA", "zoomAGrid", "|", "zoomWin", "zoomPlus", "rotateL", "rotateR", "move", "|",
            "windows", "axisZ", "axisY", "|",
            "cubeFront", "cubeBack", "cubeTop", "cubeBottom", "cubeLeft", "cubeRight", "|",
            "left", "right", "up", "down", "upLeft", "upRight",
          ]}
        />
        <span className="relative mr-[3px] flex h-[23px] w-[47px] shrink-0 items-center border border-[#8d9299] bg-white">
          <select aria-label="旋转角度" className="w-full appearance-none bg-transparent pl-0.5 text-[16px] leading-5">
            <option>15</option>
          </select>
          <Chevron className="pointer-events-none absolute bottom-1 right-1" />
        </span>
        <ToolItems items={["isoWhite", "v", "isoGrid", "v", "isoHalf", "*isoShadow", "isoFrame"]} />
        <span className="w-2" />
      </ToolGroup>
      <ToolGroup>
        <ToolItems items={["clip", "mirror", "capsule"]} />
      </ToolGroup>
      <ToolGroup>
        <ToolItems items={["*gridOn", "*plane", "*axisW", "*axisG", "|", "gridMove", "gridNode", "|", "snap", "glassCube"]} />
      </ToolGroup>
      <ToolGroup>
        <ToolItems items={["mesh", "|", "nodeAxis", "curveE", "|", "ballN", "nodeN", "|", "nodeQ", "|", "graph", "graphBox", "|", "measure"]} />
      </ToolGroup>
    </div>
  );
}

/* ---------- docked panels ---------- */

function PanelHeader({ title }) {
  return (
    <div className="flex h-[23px] shrink-0 items-center border-t border-[#eceeee] bg-linear-to-b from-[#999b9b] to-[#b5b9b9] px-[3px] text-[12px] text-[#333]">
      <h2 className="leading-5">{title}</h2>
      <button aria-label="固定" className="ml-auto">
        <svg viewBox="0 0 10 12" className="h-3 w-2.5" aria-hidden="true">
          <path d="M2.500 1h5v6M2.500 1v6M6.500 1v6M1 7h8M5 7v4" fill="none" stroke="#444" />
        </svg>
      </button>
      <button aria-label="关闭" className="ml-2.5 mr-1"><CloseMark className="h-2 w-2" /></button>
    </div>
  );
}

function PlusBox({ className = "" }) {
  return (
    <svg viewBox="0 0 9 9" className={`h-[9px] w-[9px] ${className}`} aria-hidden="true">
      <path d="M.5.500h8v8h-8z" fill="#fff" stroke="#8a94a8" />
      <path d="M2 4.500h5M4.500 2v5" stroke="#2c3c78" />
    </svg>
  );
}

const modelTree = [
  { label: "坐标系", icon: "coord", open: true },
  { label: "制造方向", icon: "coord", check: true },
  { label: "视点", icon: "triad" },
  { label: "工作平面", icon: "workplane", open: true },
  { label: "基准", icon: "triad", open: true },
  { label: "材料", icon: "material", open: true },
  { label: "属性", icon: "property", open: true },
  { label: "几何", icon: "geometry", open: true, check: true },
  { label: "网格控制", icon: "meshCtl", open: true },
  { label: "网格", icon: "meshCube", open: true, check: true },
  { label: "接触", icon: "contact", open: true },
  { label: "FSI 界面", icon: "fsi" },
  { label: "连接", icon: "link" },
  { label: "单元参数", icon: "element", open: true },
  { label: "传感器", icon: "sensor" },
  { label: "设计变量", icon: "designVar" },
  { label: "混合物", icon: "mixture" },
  { label: "颗粒", icon: "particle" },
];

function CheckBox({ id, defaultChecked, bold, label }) {
  return (
    <span className="relative flex h-[13px] w-[13px] shrink-0">
      <input
        id={id}
        type="checkbox"
        aria-label={label}
        defaultChecked={defaultChecked}
        className="peer h-[13px] w-[13px] appearance-none border border-[#333] bg-white"
      />
      <svg viewBox="0 0 13 13" className="pointer-events-none absolute inset-0 hidden peer-checked:block" aria-hidden="true">
        <path d="m3 6 2.500 3L10 3.500" fill="none" stroke="#111" strokeWidth={bold ? 2.2 : 1.3} />
      </svg>
    </span>
  );
}

function ModelRow({ item }) {
  return (
    <li className="flex h-5 items-center">
      <svg viewBox="0 0 25 20" className="h-5 w-[25px] shrink-0" aria-hidden="true">
        <path d="M14.500 0v20M15 10.500h10" stroke="#777" strokeDasharray="1 2" />
        {item.open && (
          <g>
            <path d="M10.500 6.500h8v8h-8z" fill="#fff" stroke="#8a94a8" />
            <path d="M12 10.500h5M14.500 8v5" stroke="#2c3c78" />
          </g>
        )}
      </svg>
      {item.check && (
        <span className="ml-0.5 mr-px">
          <CheckBox label={item.label} defaultChecked bold />
        </span>
      )}
      <Icon name={item.icon} />
      <span className="ml-[5px]">{item.label}</span>
    </li>
  );
}

function ModelPanel() {
  return (
    <section className="flex h-[422px] flex-col bg-white text-[12px]">
      <PanelHeader title="模型" />
      <div className="flex h-[27px] shrink-0 items-center border-t border-[#e4e4e4] pr-3 leading-[26px] text-[#111]">
        <span className="flex-1 border-r border-[#e0e0e0] pl-2">条目</span>
        <span className="w-[59px] border-r border-[#e0e0e0] pl-[5px]">号</span>
        <span className="w-[67px] border-r border-[#e0e0e0] pl-[5px]">颜色</span>
      </div>
      <div className="flex min-h-0 flex-1">
        <ul className="flex-1 overflow-hidden text-[#222]">
          <li className="flex h-[18px] items-center gap-[5px] pl-1.5">
            <Icon name="compass" />
            新建任务
          </li>
          {modelTree.map((item) => (
            <ModelRow key={item.label} item={item} />
          ))}
        </ul>
        <div className="mr-1 flex w-[15px] flex-col items-center bg-[#f1f1f1]">
          <Chevron className="my-[5px] rotate-180" />
          <div className="w-full flex-1 bg-[#cdcdcd]" />
          <Chevron className="mb-1.5 mt-6" />
        </div>
      </div>
    </section>
  );
}

function PropertyPanel() {
  return (
    <section className="flex flex-1 flex-col bg-white text-[12px]">
      <PanelHeader title="特性" />
      <div className="flex h-[18px] items-center gap-[9px] bg-[#ececec] pl-[5px] text-[#555]">
        <PlusBox />
        一般
      </div>
      <div className="grid flex-1 grid-cols-2">
        <div className="border-r border-[#e4e4e4]" />
      </div>
    </section>
  );
}

/* ---------- 3D view ---------- */

const COS = 774;
const SIN = 447;
const gridSteps = Array.from({ length: 41 }, (_, i) => i - 20);

function GridLines() {
  return gridSteps.map((n) => {
    const cx = (n / 40) * COS;
    const cy = (n / 40) * SIN;
    const style = n % 5 === 0 ? { stroke: "#a8a8a8" } : { stroke: "#b0b0b0", strokeDasharray: "2 2" };
    return (
      <g key={n} shapeRendering="crispEdges" {...style}>
        <path d={`M${cx - COS / 2} ${-cy - SIN / 2}L${cx + COS / 2} ${-cy + SIN / 2}`} />
        <path d={`M${cx - COS / 2} ${cy + SIN / 2}L${cx + COS / 2} ${cy - SIN / 2}`} />
      </g>
    );
  });
}

function Canvas() {
  return (
    <svg className="h-full w-full" aria-hidden="true">
      <svg x="50%" y="50%" overflow="visible">
        <path d="M-900-520 900 520" stroke="#f6cfcf" strokeWidth="2.500" />
        <path d="M-900 520 900-520" stroke="#c8f3c8" strokeWidth="2.500" />
        <GridLines />
        <path d="M-387-223.500 387 223.500" stroke="#e0c0c0" strokeWidth="1.500" />
        <path d="M-387 223.500 387-223.500" stroke="#b0d8b0" strokeWidth="1.500" />
        <path d="M0-400V400" stroke="#cfcbf6" strokeWidth="3" />
        <g fill="none" stroke="#23777a" strokeWidth="1.200">
          <path d="M-18-31 18-10V32L-18 11z" />
          <path d="M-18-10 18-31V11L-18 32z" />
          <path d="M-18-31V32M18-31V32" />
          <path d="M-37 0 0-21 37 0 0 21z" />
        </g>
        <path d="M0 0v-36" stroke="#0808d8" strokeWidth="2" />
        <path d="M0-46l4.500 12h-9z" fill="#0808d8" />
        <path d="m0 0 30-17" stroke="#18e018" strokeWidth="2" />
        <path d="m39-22.500-12 1 5 9z" fill="#18e818" />
        <path d="m0 0 30 17" stroke="#e01010" strokeWidth="2" />
        <path d="m39 22.500-12-1 5-9z" fill="#e01010" />
      </svg>
      <svg x="100%" y="100%" overflow="visible">
        <g transform="translate(-70 -50)">
          <path d="M0 0v-22" stroke="#0b0ba8" strokeWidth="4" />
          <path d="M0-31l4.500 7-1.500 4h-6l-1.500-4z" fill="#0b0ba8" />
          <path d="m0 0 20-11" stroke="#18d818" strokeWidth="3" />
          <path d="m27-15-11 1 5 8z" fill="#18e818" />
          <path d="m0 0 20 11" stroke="#c81010" strokeWidth="3" />
          <path d="m27 15-11-1 5-8z" fill="#d81010" />
          <circle r="3" fill="#d8d020" />
          <g fontFamily="Liberation Sans, sans-serif" fontSize="13">
            <text x="1" y="-36" fill="#2020a0">Z</text>
            <text x="31" y="-18" fill="#30c830">Y</text>
            <text x="31" y="19" fill="#c02020">X</text>
          </g>
        </g>
      </svg>
    </svg>
  );
}

function Ruler() {
  return (
    <div className="absolute left-[19px] top-2 w-[150px] font-['Liberation_Mono',monospace] text-[10px] leading-3 text-[#999]">
      <div className="flex items-start gap-0.5">
        <svg viewBox="0 0 121 12" className="h-3 w-[121px]" aria-hidden="true">
          <path d="M.5.500h120v8H.5z" fill="#fff" stroke="#999" />
          <path d="M1 1h59v4H1zM60 5h60v3H60z" fill="#aaa" />
          <path d="M.5 0v12M60.500 0v12M120.500 0v12" stroke="#888" />
        </svg>
        mm
      </div>
      <div className="-ml-0.5 flex gap-11 pt-1.5">
        <span>0</span>
        <span>43.9</span>
      </div>
    </div>
  );
}

function FilterBox({ label, text, className }) {
  return (
    <div className={`mt-1 flex h-6 items-center justify-between bg-white ${className}`}>
      {text}
      <button aria-label={label} className="flex h-full w-3.5 items-center justify-center bg-[#a4aab3]">
        <Caret />
      </button>
    </div>
  );
}

function SelectionBar() {
  return (
    <div className="absolute left-[459px] top-2 flex items-center text-[12px]">
      <ToolItems items={["*pickBox", "pickAdd", "|", "pickUndo", "v", "|"]} />
      <FilterBox label="选择过滤" text="基础" className="ml-1.5 w-[123px] pl-1" />
      <FilterBox label="几何类型" text="全部几何 (P)" className="mr-0.5 w-[130px] pl-2" />
      <ToolItems items={["|", "polyPick", "polyPick", "lines", "|", "diamondPick", "boxPick", "|", "ringPick", "ringPickOff", "|", "idTag"]} />
    </div>
  );
}

function ViewTabs() {
  return (
    <div className="flex h-6 items-start bg-linear-to-b from-[#c9ccd1] to-[#969da8] text-[12px]">
      <svg viewBox="0 0 6 10" className="ml-1.5 mt-2 h-2.5 w-1.5" aria-hidden="true">
        <path d="M5.500 1v8L1 5z" fill="none" stroke="#555" />
      </svg>
      <button className="ml-1 flex h-[21px] w-[96px] items-center gap-2 bg-linear-to-b from-[#d4d6da] to-[#9da3ac] pl-[29px] [clip-path:polygon(0_0,100%_0,100%_100%,20px_100%)]">
        <NBadge />
        <span className="whitespace-nowrap">开始页</span>
      </button>
      <button className="-ml-5 flex h-[21px] w-[119px] items-center rounded-br bg-white pl-[29px] font-bold [clip-path:polygon(0_0,100%_0,100%_100%,20px_100%)]">
        <NBadge />
        <span className="ml-[9px]">NFXD1</span>
        <CloseMark className="ml-2.5 mt-1 h-2 w-2" />
      </button>
      <svg viewBox="0 0 6 10" className="ml-auto mr-3 mt-2 h-2.5 w-1.5" aria-hidden="true">
        <path d="M.5 1v8L5 5z" fill="none" stroke="#555" />
      </svg>
    </div>
  );
}

/* ---------- options dialog ---------- */

const optionTree = [
  { label: "分析", icon: "report" },
  { label: "分析控制(结构)", icon: "report", child: true },
  { label: "分析控制(CFD)", icon: "report", child: true },
  { label: "分析结果", icon: "report", child: true, last: true },
  { label: "结果", icon: "rainbow" },
  { label: "一般", icon: "rainbow", child: true },
  { label: "云图", icon: "contour", child: true },
  { label: "矢量", icon: "vector", child: true },
  { label: "变形", icon: "deform", child: true },
  { label: "无结果", icon: "noResult", child: true },
  { label: "一维单元结果图", icon: "diagram1d", child: true },
  { label: "图形", icon: "plot", child: true },
  { label: "动画", icon: "movie", child: true },
  { label: "图例", icon: "legend", child: true },
  { label: "线上图", icon: "lineDiagram", child: true, last: true },
  { label: "CFD", icon: "ship" },
  { label: "CFD 监控", icon: "monitor", child: true, last: true },
];

function OptionTree() {
  const [selected, setSelected] = useState("分析控制(CFD)");
  return (
    <ul className="w-[172px] shrink-0 border-l border-t border-[#888] pl-px pt-px">
      {optionTree.map((item) => (
        <li key={item.label} className="flex h-4 items-center">
          {item.child && (
            <svg viewBox="0 0 20 16" className="h-4 w-5 shrink-0" aria-hidden="true">
              <path d={item.last ? "M8.500 0v8M9 8.500h11" : "M8.500 0v16M9 8.500h11"} fill="none" stroke="#999" strokeDasharray="1 1" />
            </svg>
          )}
          <Icon name={item.icon} />
          <button
            onClick={() => setSelected(item.label)}
            className={`ml-0.5 h-4 whitespace-nowrap px-[3px] leading-4 ${selected === item.label ? "bg-[#0a6fc8] text-white" : ""}`}
          >
            {item.label}
          </button>
        </li>
      ))}
    </ul>
  );
}

function CheckOption({ id, label, checked }) {
  return (
    <span className="flex h-[18px] items-center gap-0.5 whitespace-nowrap">
      <CheckBox id={id} defaultChecked={checked} />
      <label htmlFor={id}>{label}</label>
    </span>
  );
}

function RadioOption({ id, name, label, checked }) {
  return (
    <span className="flex h-[18px] items-center gap-0.5 whitespace-nowrap">
      <input
        id={id}
        name={name}
        type="radio"
        defaultChecked={checked}
        className="h-[13px] w-[13px] appearance-none rounded-full border border-[#333] bg-white checked:bg-[#222] checked:shadow-[inset_0_0_0_2px_#fff]"
      />
      <label htmlFor={id}>{label}</label>
    </span>
  );
}

function SelectBox({ id, value, className }) {
  return (
    <span className={`relative flex h-[22px] items-center ${className}`}>
      <select id={id} defaultValue={value} className="h-full w-full appearance-none border border-[#adadad] bg-[#e1e1e1] pl-1 text-[11px] text-[#333]">
        <option>{value}</option>
      </select>
      <Chevron className="pointer-events-none absolute right-1" />
    </span>
  );
}

function PushButton({ children, primary, className = "w-[66px]" }) {
  return (
    <button className={`h-[22px] bg-[#e1e1e1] leading-4 ${primary ? "border-2 border-[#0f6ab4]" : "border border-[#adadad]"} ${className}`}>
      {children}
    </button>
  );
}

function CoefRow({ id, label, value }) {
  return (
    <div className="flex h-[23px] items-center justify-between pl-2.5 pr-2.5 text-[#9a9a9a]">
      <label htmlFor={id} className="pt-0.5">{label}</label>
      <input id={id} disabled defaultValue={value} className="h-[21px] w-[89px] border border-[#ccc] bg-white pr-[3px] text-right text-[11px] text-[#777]" />
    </div>
  );
}

function AnalysisSettings() {
  return (
    <div className="w-[306px] border-l border-t border-[#888] pl-[5px] pt-3">
      <div className="w-[297px] border border-[#dcdcdc] pb-[9px] pl-[9px] pr-[9px] pt-1">
        <div className="flex h-[22px] items-center justify-between pl-[7px] pr-0.5">
          <label htmlFor="cpu">CPU 数量 (可手动输入)</label>
          <span className="flex h-[21px] w-[126px] border border-[#888] bg-white p-px">
            <input id="cpu" defaultValue="1" className="w-full min-w-0 pr-[3px] text-right text-[11px]" />
            <span className="flex w-4 shrink-0 flex-col">
              <button aria-label="增加" className="flex flex-1 rotate-180 items-center justify-center border border-[#bbb] bg-[#eee]"><Caret color="#111" /></button>
              <button aria-label="减少" className="flex flex-1 items-center justify-center border border-[#bbb] bg-[#eee]"><Caret color="#111" /></button>
            </span>
          </span>
        </div>
        <div className="grid grid-cols-[144px_1fr] pl-[7px]">
          <CheckOption id="gpu" label="使用 GPU 加速" />
          <CheckOption id="fast" label="Enable 快速装配生效" />
        </div>

        <fieldset className="mt-px border border-[#dcdcdc] pb-0.5 pl-[7px]">
          <legend className="-ml-px px-px leading-4">单元处理方式</legend>
          <RadioOption id="mix" name="element" label="混合(精确)" />
          <RadioOption id="reduced" name="element" label="减缩(有效)" />
          <RadioOption id="standard" name="element" label="标准(稳定)" checked />
        </fieldset>

        <fieldset className="border border-[#dcdcdc] pb-[3px] pl-[9px] pr-[9px]">
          <legend className="-ml-px px-px leading-4">方程求解(结构)</legend>
          <div className="grid grid-cols-[148px_1fr]">
            <RadioOption id="iter" name="solver" label="迭代" checked />
            <RadioOption id="front" name="solver" label="多波前" />
          </div>
          <div className="-mt-px flex h-[23px] items-center justify-between">
            <label htmlFor="level">稳定水平</label>
            <SelectBox id="level" value="1" className="w-24" />
          </div>
          <div className="flex h-[23px] items-center justify-between">
            <label htmlFor="tries">方程求解最大尝试数</label>
            <SelectBox id="tries" value="1" className="w-24" />
          </div>
        </fieldset>

        <fieldset className="border border-[#dcdcdc] px-[7px] pb-2">
          <legend className="-ml-px px-px leading-4">收敛加速器</legend>
          <div className="pl-[11px] pt-0.5">
            <CheckOption id="pressure" label="压力二阶预处理" checked />
            <CheckOption id="lu" label="高阶不完全LU 分解" />
          </div>
          <fieldset className="border border-[#dcdcdc] pb-1">
            <legend className="ml-2.5 w-[150px]">
              <CheckOption id="multi" label="多级收缩" />
            </legend>
            <div className="-mt-1">
              <CoefRow id="mid" label="中级系数" value="0.3" />
              <CoefRow id="top" label="顶/底等级系数" value="0.7" />
            </div>
          </fieldset>
        </fieldset>
      </div>
    </div>
  );
}

const dialogTabs = ["一般", "几何/网格/连接", "载荷/边界条件", "分析/结果"];

function OptionsDialog() {
  const [tab, setTab] = useState("分析/结果");
  return (
    <div
      role="dialog"
      aria-label="选项"
      className="absolute left-[502px] top-[199px] z-20 w-[541px] border border-[#666] bg-white pb-[11px] pl-[9px] pr-2.5 font-['Liberation_Sans','Noto_Sans_CJK_SC',sans-serif] text-[12px] text-black shadow-[2px_4px_16px_rgba(0,0,0,0.4)]"
    >
      <div className="-ml-1.5 flex h-6 items-center justify-between">
        <h2>选项</h2>
        <button aria-label="关闭">
          <svg viewBox="0 0 11 11" className="h-[11px] w-[11px]" aria-hidden="true">
            <path d="m.5.500 10 10M10.500.500l-10 10" stroke="#111" strokeWidth="1.100" />
          </svg>
        </button>
      </div>

      <div role="tablist" className="mt-3 flex items-end pl-px">
        {dialogTabs.map((name) => (
          <button
            key={name}
            role="tab"
            aria-selected={tab === name}
            onClick={() => setTab(name)}
            className={`relative whitespace-nowrap border border-b-0 border-[#dcdcdc] ${
              tab === name ? "z-10 -mb-px h-[22px] bg-white px-1.5" : "h-[19px] bg-[#f0f0f0] px-[5px] first:px-[7px]"
            }`}
          >
            {name}
          </button>
        ))}
      </div>
      <div className="flex h-[396px] gap-1.5 border border-[#dcdcdc] pb-[19px] pl-[19px] pt-3.5 shadow-[1px_1px_0_#eee]">
        <OptionTree />
        <AnalysisSettings />
      </div>

      <fieldset className="mt-[3px] border border-[#dcdcdc] px-2 pb-1.5">
        <legend className="-ml-px px-px leading-4">输入设置</legend>
        <div className="flex items-center pt-1.5">
          <label htmlFor="profile" className="w-[99px]">配置文件</label>
          <SelectBox id="profile" value="CFD" className="mr-[9px] flex-1" />
          <PushButton className="mr-[3px] w-[66px]">重设</PushButton>
          <PushButton>全部重设</PushButton>
        </div>
      </fieldset>

      <div className="mt-3 flex justify-end gap-1">
        <PushButton className="mr-3.5 w-[145px]">用户定义快捷键...</PushButton>
        <PushButton primary>确认</PushButton>
        <PushButton>取消</PushButton>
        <PushButton>适用</PushButton>
      </div>
    </div>
  );
}

/* ---------- page ---------- */

const units = ["N", "mm", "J", "sec"];

export default function App() {
  return (
    <div className="relative flex h-screen flex-col overflow-hidden bg-[#525252] font-['Noto_Sans','Noto_Sans_CJK_SC',sans-serif]">
      <TitleBar />
      <MenuBar />
      <Ribbon />
      <Toolbars />

      <main className="mt-px flex min-h-0 flex-1 gap-1">
        <aside className="flex w-[403px] shrink-0 flex-col">
          <ModelPanel />
          <div className="mb-[7px] flex h-[21px] items-center text-[12px] text-white">
            <button className="ml-1 h-full rounded-b bg-[#e9eff0] px-1 text-black">模型</button>
            <button className="px-2">载荷边界条件</button>
          </div>
          <PropertyPanel />
        </aside>

        <div className="flex min-w-0 flex-1 flex-col">
          <div className="min-h-0 flex-1 bg-white pb-0.5 pl-1 pr-1 pt-[3px]">
            <div className="relative h-full overflow-hidden border border-b-[#ddd] border-l-[#666] border-r-[#ddd] border-t-[#666]">
              <Canvas />
              <Ruler />
              <SelectionBar />
            </div>
          </div>
          <ViewTabs />
          <section className="mt-[5px] flex h-[180px] flex-col bg-white">
            <PanelHeader title="输出" />
          </section>
        </div>

        <aside className="w-[18px] pt-[3px]">
          <button className="flex h-[95px] w-full flex-col items-center gap-1.5 border border-[#b89a3c] bg-linear-to-r from-[#ffeeb0] to-[#f8d46c] pt-1 text-[12px] leading-4 text-[#5a4a20]">
            <span className="h-3.5 w-3.5 shrink-0 rounded-full bg-radial from-[#e8ffd0] to-[#58b040]" />
            <span className="[text-orientation:sideways] [writing-mode:vertical-rl]">任务面板</span>
          </button>
        </aside>
      </main>

      <footer className="flex h-[19px] shrink-0 justify-end bg-linear-to-b from-[#434853] to-[#262626] pr-[19px] font-['Liberation_Mono',monospace] text-[10px]">
        <span className="mr-[335px] w-px bg-[#666]" />
        <span className="mr-[237px] w-px bg-[#666]" />
        {units.map((unit) => (
          <span key={unit} className="relative mr-0.5 mt-0.5 w-[49px]">
            <select aria-label={unit} className="h-5 w-full appearance-none border border-[#999] bg-[#e3e3e3] pl-1 text-black">
              <option>{unit}</option>
            </select>
            <Chevron className="pointer-events-none absolute right-1 top-2" />
          </span>
        ))}
      </footer>

      <OptionsDialog />
    </div>
  );
}
